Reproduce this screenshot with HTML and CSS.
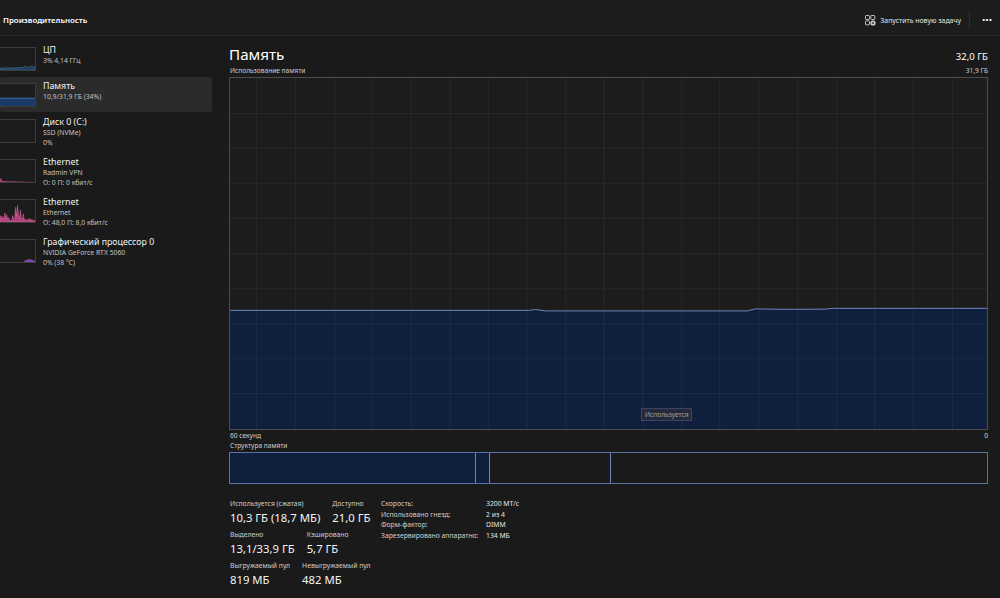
FILE: index.html
```html
<!DOCTYPE html>
<html lang="ru">
<head>
    <meta charset="UTF-8">
    <title>Производительность</title>
    <link rel="stylesheet" href="styles.css">
</head>
<body>

    <!-- Top bar -->
    <div class="header">
        <div class="page-title">Производительность</div>
        <div class="header-actions">
            <button class="run-task">
                <svg width="11" height="11" viewBox="0 0 11 11" fill="none" stroke="#d6d6d6" stroke-width="0.9">
                    <rect x="0.5" y="0.5" width="4" height="4" rx="0.8"/>
                    <rect x="5.8" y="0.5" width="4" height="4" rx="0.8"/>
                    <rect x="0.5" y="5.8" width="4" height="4" rx="0.8"/>
                    <circle cx="8" cy="8" r="2.6" fill="#d6d6d6" stroke="none"/>
                    <path d="M8 6.8v2.4M6.8 8h2.4" stroke="#1c1c1c" stroke-width="0.8"/>
                </svg>
                Запустить новую задачу
            </button>
            <div class="divider"></div>
            <button class="more">&middot;&middot;&middot;</button>
        </div>
    </div>

    <div class="layout">
        <!-- Sidebar with devices -->
        <div class="sidebar">
            <div class="device">
                <svg class="thumb" viewBox="0 0 36 24" preserveAspectRatio="none">
                    <path d="M0,22 L4,22 L5,21.5 L8,22 L12,21.6 L16,22 L20,21.4 L24,21.6 L25,20 L27,21.5 L29,20.5 L31,21 L33,19.5 L35,21 L36,21 L36,24 L0,24Z" fill="#1d3550" stroke="#4f8fc4" stroke-width="0.6"/>
                </svg>
                <div class="device-text">
                    <div class="device-name">ЦП</div>
                    <div class="device-sub">3% 4,14 ГГц</div>
                </div>
            </div>
            <div class="device active">
                <svg class="thumb" viewBox="0 0 36 24" preserveAspectRatio="none">
                    <rect x="0" y="15.5" width="36" height="8.5" fill="#193a66"/>
                    <path d="M0,15.5 L36,15.5" stroke="#4f7fc0" stroke-width="0.8"/>
                </svg>
                <div class="device-text">
                    <div class="device-name">Память</div>
                    <div class="device-sub">10,9/31,9 ГБ (34%)</div>
                </div>
            </div>
            <div class="device">
                <svg class="thumb" viewBox="0 0 36 24" preserveAspectRatio="none"></svg>
                <div class="device-text">
                    <div class="device-name">Диск 0 (C:)</div>
                    <div class="device-sub">SSD (NVMe)</div>
                    <div class="device-sub">0%</div>
                </div>
            </div>
            <div class="device">
                <svg class="thumb" viewBox="0 0 36 24" preserveAspectRatio="none">
                    <path d="M0,24 L0,21 L1,19 L2,22 L3,23 L36,24Z" fill="#a53c6e"/>
                </svg>
                <div class="device-text">
                    <div class="device-name">Ethernet</div>
                    <div class="device-sub">Radmin VPN</div>
                    <div class="device-sub">О: 0 П: 0 кбит/с</div>
                </div>
            </div>
            <div class="device">
                <svg class="thumb" viewBox="0 0 36 24" preserveAspectRatio="none">
                    <path d="M0,24 L0,20 L1,17 L2,21 L3,18 L4,22 L5,14 L6,21 L7,16 L8,22 L9,19 L10,23 L12,22 L13,17 L14,22 L15,21 L16,8 L17,18 L18,6 L19,16 L20,21 L21,11 L22,20 L23,22 L24,15 L25,22 L27,21 L28,23 L30,20 L31,22 L33,21 L34,23 L36,22 L36,24Z" fill="#b0427a" stroke="#e46aa6" stroke-width="0.5"/>
                </svg>
                <div class="device-text">
                    <div class="device-name">Ethernet</div>
                    <div class="device-sub">Ethernet</div>
                    <div class="device-sub">О: 48,0 П: 8,0 кбит/с</div>
                </div>
            </div>
            <div class="device">
                <svg class="thumb" viewBox="0 0 36 24" preserveAspectRatio="none">
                    <path d="M25,24 L26,22.5 L28,22 L30,21 L31,22 L33,21.5 L34,23 L36,23 L36,24Z" fill="#7c3fa8" stroke="#a866d6" stroke-width="0.5"/>
                </svg>
                <div class="device-text">
                    <div class="device-name">Графический процессор 0</div>
                    <div class="device-sub">NVIDIA GeForce RTX 5060</div>
                    <div class="device-sub">0% (38 °C)</div>
                </div>
            </div>
        </div>

        <!-- Memory details -->
        <div class="main">
            <div class="title-row">
                <div class="main-title">Память</div>
                <div class="total">32,0 ГБ</div>
            </div>
            <div class="caption-row">
                <span>Использование памяти</span>
                <span>31,9 ГБ</span>
            </div>

            <div class="graph">
                <svg viewBox="0 0 758 352" preserveAspectRatio="none">
                    <path d="M0,233 L300,233 L306,232.2 L316,233.6 L518,233.6 L526,231.6 L560,232 L596,231.8 L604,231 L758,231 L758,352 L0,352Z" fill="#0f1f3d"/>
                    <g stroke="rgba(255,255,255,0.06)" stroke-width="1">
                        <path d="M26.5,0V352M65.5,0V352M104.5,0V352M142.5,0V352M181.5,0V352M220.5,0V352M258.5,0V352M297.5,0V352M336.5,0V352M374.5,0V352M413.5,0V352M452.5,0V352M490.5,0V352M529.5,0V352M568.5,0V352M607.5,0V352M645.5,0V352M684.5,0V352M723.5,0V352"/>
                        <path d="M0,35.5H758M0,70.5H758M0,105.5H758M0,140.5H758M0,176.5H758M0,211.5H758M0,246.5H758M0,281.5H758M0,316.5H758"/>
                    </g>
                    <path d="M0,233 L300,233 L306,232.2 L316,233.6 L518,233.6 L526,231.6 L560,232 L596,231.8 L604,231 L758,231" fill="none" stroke="#6d88b8" stroke-width="1"/>
                </svg>
                <div class="graph-tag">Используется</div>
            </div>

            <div class="caption-row axis">
                <span>60 секунд</span>
                <span>0</span>
            </div>
            <div class="caption-row">
                <span>Структура памяти</span>
            </div>

            <div class="structure">
                <div class="seg in-use"></div>
                <div class="seg modified"></div>
                <div class="seg standby"></div>
                <div class="seg free"></div>
            </div>

            <!-- Stats -->
            <div class="stats">
                <div class="stats-left">
                    <div class="stat-row">
                        <div class="stat">
                            <div class="stat-label">Используется (сжатая)</div>
                            <div class="stat-value">10,3 ГБ (18,7 МБ)</div>
                        </div>
                        <div class="stat">
                            <div class="stat-label">Доступно</div>
                            <div class="stat-value">21,0 ГБ</div>
                        </div>
                    </div>
                    <div class="stat-row">
                        <div class="stat">
                            <div class="stat-label">Выделено</div>
                            <div class="stat-value">13,1/33,9 ГБ</div>
                        </div>
                        <div class="stat">
                            <div class="stat-label">Кэшировано</div>
                            <div class="stat-value">5,7 ГБ</div>
                        </div>
                    </div>
                    <div class="stat-row">
                        <div class="stat">
                            <div class="stat-label">Выгружаемый пул</div>
                            <div class="stat-value">819 МБ</div>
                        </div>
                        <div class="stat">
                            <div class="stat-label">Невыгружаемый пул</div>
                            <div class="stat-value">482 МБ</div>
                        </div>
                    </div>
                </div>

                <div class="specs">
                    <div class="spec-label">Скорость:</div><div class="spec-value">3200 MT/c</div>
                    <div class="spec-label">Использовано гнезд:</div><div class="spec-value">2 из 4</div>
                    <div class="spec-label">Форм-фактор:</div><div class="spec-value">DIMM</div>
                    <div class="spec-label">Зарезервировано аппаратно:</div><div class="spec-value">134 МБ</div>
                </div>
            </div>
        </div>
    </div>

</body>
</html>
```

FILE: styles.css
```css
body {
    margin: 0;
    width: 1000px;
    height: 598px;
    overflow: hidden;
    background-color: #1a1a1a;
    color: #fff;
    font-family: "Noto Sans", "Open Sans", sans-serif;
}

button {
    background: none;
    border: none;
    color: inherit;
    font-family: inherit;
    cursor: pointer;
    padding: 0;
}

/* Top bar */
.header {
    height: 35px;
    display: flex;
    align-items: center;
    justify-content: space-between;
    padding: 0 6px 0 3px;
    background-color: #1c1c1c;
    border-bottom: 1px solid #2b2b2b;
}

.page-title {
    font-size: 7.9px;
    font-weight: 600;
    margin-top: 5px;
}

.header-actions {
    display: flex;
    align-items: center;
    margin-top: 5px;
}

.run-task {
    display: flex;
    align-items: center;
    gap: 4px;
    font-size: 6.9px;
    color: #e8e8e8;
}

.divider {
    width: 1px;
    height: 18px;
    background-color: #2e2e2e;
    margin: 0 10px 0 8px;
}

.more {
    font-size: 12px;
    font-weight: 700;
    line-height: 10px;
    width: 14px;
}

.layout {
    display: flex;
}

/* Sidebar */
.sidebar {
    width: 212px;
    padding-top: 5px;
    flex-shrink: 0;
}

.device {
    display: flex;
    align-items: flex-start;
    gap: 7px;
    padding: 4px 0 5px;
    border-radius: 3px;
}

.device.active {
    background-color: #2b2b2b;
    margin: 1px 0;
}

.thumb {
    width: 36px;
    height: 24px;
    margin-top: 2px;
    box-sizing: border-box;
    border: 1px solid #3c3c3c;
    border-left: none;
    background-color: #1c1c1c;
    flex-shrink: 0;
}

.device-name {
    font-size: 8.8px;
    line-height: 11px;
    color: #f2f2f2;
}

.device-sub {
    font-size: 6.8px;
    line-height: 10px;
    color: #c4c4c4;
}

/* Main area */
.main {
    flex: 1;
    padding: 7px 12px 0 17px;
    display: flex;
    flex-direction: column;
}

.title-row {
    display: flex;
    justify-content: space-between;
    align-items: baseline;
    height: 23px;
}

.main-title {
    font-size: 15.2px;
    line-height: 23px;
}

.total {
    font-size: 9.6px;
}

.caption-row {
    display: flex;
    justify-content: space-between;
    font-size: 6.6px;
    line-height: 10px;
    height: 10px;
    color: #d0d0d0;
    padding-left: 1px;
}

.caption-row.axis {
    height: 11px;
    line-height: 12px;
}

.graph {
    position: relative;
    height: 353px;
    box-sizing: border-box;
    border: 1px solid #4d4d4d;
    background-color: #1c1c1c;
    margin-top: 1px;
}

.graph svg {
    display: block;
    width: 100%;
    height: 100%;
}

.graph-tag {
    position: absolute;
    left: 411px;
    top: 330px;
    font-size: 6.6px;
    line-height: 9px;
    padding: 1px 3px;
    color: #a0a0a0;
    background-color: #232a3c;
    border: 1px solid #3b4460;
}

/* Structure bar */
.structure {
    display: flex;
    height: 32px;
    box-sizing: border-box;
    border: 1px solid #5673a3;
    margin-top: 1px;
}

.seg {
    height: 100%;
    border-right: 1px solid #6b86b5;
}

.seg.in-use {
    width: 245px;
    background-color: #0f1f3d;
}

.seg.modified {
    width: 13px;
    background-color: #0f1f3d;
}

.seg.standby {
    width: 120px;
}

.seg.free {
    flex: 1;
    border-right: none;
}

/* Stats */
.stats {
    display: flex;
    align-items: flex-start;
    margin-top: 15px;
    padding-left: 1px;
}

.stats-left {
    width: 151px;
    flex-shrink: 0;
    display: flex;
    flex-direction: column;
    gap: 3px;
}

.stat-row {
    display: flex;
    gap: 12px;
    white-space: nowrap;
}

.stat-label {
    font-size: 6.8px;
    line-height: 10px;
    color: #cfcfcf;
}

.stat-value {
    font-size: 11.3px;
    line-height: 18px;
    color: #f4f4f4;
}

.specs {
    display: grid;
    grid-template-columns: 105px auto;
    font-size: 6.8px;
    line-height: 10.6px;
    color: #cfcfcf;
}

.spec-value {
    color: #e6e6e6;
}
```
